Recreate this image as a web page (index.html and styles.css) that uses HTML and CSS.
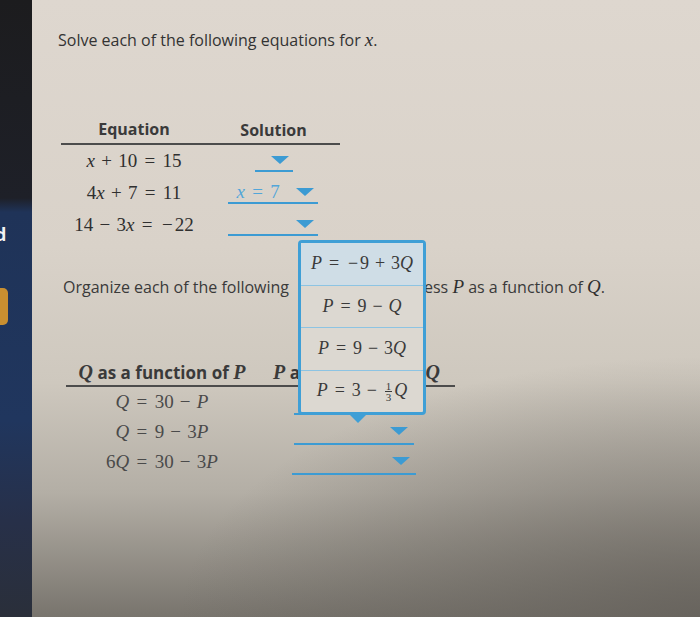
FILE: index.html
```html
<!DOCTYPE html>
<html>
<head>
<meta charset="utf-8">
<title>Equations</title>
<link rel="stylesheet" href="styles.css">
</head>
<body>
<div class="screen">
  <aside class="rail">
    <span class="rail-letter">d</span>
    <span class="rail-tab"></span>
  </aside>
  <main class="page">
    <p class="prompt">Solve each of the following equations for <span class="m"><i class="v">x</i></span>.</p>

    <div class="grid t1">
      <div class="hd">Equation</div>
      <div class="hd hd-sol">Solution</div>

      <div class="cell"><span class="m"><i class="v">x</i><span class="bin">+</span>10<span class="rel">=</span>15</span></div>
      <div class="cell"><span class="dd dd-s"><svg class="caret" viewBox="0 0 18 8"><path d="M0 0H18L9 8Z"/></svg></span></div>

      <div class="cell"><span class="m">4<i class="v">x</i><span class="bin">+</span>7<span class="rel">=</span>11</span></div>
      <div class="cell"><span class="dd dd-m"><span class="m val"><i class="v">x</i><span class="rel">=</span>7</span><svg class="caret" viewBox="0 0 18 8"><path d="M0 0H18L9 8Z"/></svg></span></div>

      <div class="cell"><span class="m">14<span class="bin">−</span>3<i class="v">x</i><span class="rel">=</span><span class="un">−</span>22</span></div>
      <div class="cell"><span class="dd dd-m"><svg class="caret" viewBox="0 0 18 8"><path d="M0 0H18L9 8Z"/></svg></span></div>
    </div>

    <p class="prompt prompt-2">Organize each of the following <span class="covered">equations to expr</span>ess <span class="m"><i class="v">P</i></span> as a function of <span class="m"><i class="v">Q</i></span>.</p>

    <div class="grid t2">
      <div class="hd"><span class="m"><i class="v">Q</i></span>&nbsp;as a function of&nbsp;<span class="m"><i class="v">P</i></span></div>
      <div class="hd"><span class="m"><i class="v">P</i></span>&nbsp;as a function of&nbsp;<span class="m"><i class="v">Q</i></span></div>

      <div class="cell"><span class="m lt"><i class="v">Q</i><span class="rel">=</span>30<span class="bin">−</span><i class="v">P</i></span></div>
      <div class="cell"><span class="dd dd-l"><svg class="caret" viewBox="0 0 18 8"><path d="M0 0H18L9 8Z"/></svg></span></div>

      <div class="cell"><span class="m lt"><i class="v">Q</i><span class="rel">=</span>9<span class="bin">−</span>3<i class="v">P</i></span></div>
      <div class="cell"><span class="dd dd-l"><svg class="caret" viewBox="0 0 18 8"><path d="M0 0H18L9 8Z"/></svg></span></div>

      <div class="cell"><span class="m lt">6<i class="v">Q</i><span class="rel">=</span>30<span class="bin">−</span>3<i class="v">P</i></span></div>
      <div class="cell"><span class="dd dd-l dd-last"><svg class="caret" viewBox="0 0 18 8"><path d="M0 0H18L9 8Z"/></svg></span></div>
    </div>

    <div class="menu">
      <div class="opt opt-on"><span class="m"><i class="v">P</i><span class="rel">=</span><span class="un">−</span>9<span class="bin">+</span>3<i class="v">Q</i></span></div>
      <div class="opt"><span class="m"><i class="v">P</i><span class="rel">=</span>9<span class="bin">−</span><i class="v">Q</i></span></div>
      <div class="opt"><span class="m"><i class="v">P</i><span class="rel">=</span>9<span class="bin">−</span>3<i class="v">Q</i></span></div>
      <div class="opt"><span class="m"><i class="v">P</i><span class="rel">=</span>3<span class="bin">−</span><span class="frac"><span class="num">1</span><span class="den">3</span></span><i class="v">Q</i></span></div>
    </div>
  </main>
</div>
</body>
</html>
```

FILE: styles.css
```css
* { box-sizing: border-box; margin: 0; padding: 0; }

html, body { width: 700px; height: 617px; overflow: hidden; }

body {
  font-family: "Open Sans", "DejaVu Sans", sans-serif;
  color: #363636;
  background: #d8d1c8;
}

.screen {
  display: flex;
  width: 700px;
  height: 617px;
  background:
    radial-gradient(ellipse 520px 260px at 100% 100%, rgba(100, 96, 90, 0.8) 0%, rgba(100, 96, 90, 0) 100%),
    linear-gradient(180deg, #ded7cf 0%, #d9d2c9 40%, #cec8be 62%, #b3aea5 80%, #78746d 100%);
}

/* left dark rail */
.rail {
  width: 32px;
  flex: none;
  display: flex;
  flex-direction: column;
  align-items: flex-start;
  padding-top: 224px;
  overflow: hidden;
  background: linear-gradient(180deg, #1c1c1e 0, #1e2028 198px, #1f3358 212px, #20365e 420px, #273049 520px, #2a2f3a 100%);
}

.rail-letter {
  color: #f2f2f2;
  font-weight: 700;
  font-size: 18px;
  line-height: 20px;
  margin-left: -5px;
}

.rail-tab {
  width: 8px;
  height: 37px;
  margin-top: 44px;
  background: #c98f30;
  border-radius: 0 5px 5px 0;
}

/* content */
.page {
  position: relative;
  flex: 1;
  padding-top: 29px;
}

.prompt {
  margin-left: 26px;
  font-size: 16px;
  line-height: 22px;
  color: #333;
}

.prompt-2 {
  margin: 35px 0 0 31px;
  color: #3a3a3a;
}

/* part of the sentence hidden under the open menu */
.covered {
  margin-left: 6px;
  letter-spacing: -0.4px;
}

/* math */
.m {
  font-family: "Liberation Serif", "DejaVu Serif", serif;
  font-size: 19px;
  color: #2f2f2f;
  white-space: nowrap;
}

.m .v { font-style: italic; }

.bin { display: inline-block; width: 1.222em; text-align: center; }
.rel { display: inline-block; width: 1.334em; text-align: center; }
.un  { display: inline-block; width: 0.778em; text-align: center; }

.m.lt { color: #4a4a4a; }

/* tables */
.grid { display: grid; }

.t1 {
  margin: 64px 0 0 29px;
  width: 279px;
  grid-template-columns: 146px 133px;
}

.t2 {
  margin: 62px 0 0 34px;
  width: 389px;
  grid-template-columns: 192px 197px;
}

.hd {
  height: 30px;
  display: flex;
  align-items: center;
  justify-content: center;
  font-weight: 700;
  font-size: 16px;
  color: #3a3a3a;
  border-bottom: 2px solid #4c4c4c;
  white-space: nowrap;
}

.hd-sol { padding-top: 2px; }

.t2 .hd { height: 27px; font-size: 17px; }
.t2 .hd .m { font-size: 20px; color: #3a3a3a; }

.cell {
  height: 32px;
  display: flex;
  align-items: center;
  justify-content: center;
}

.t2 .cell { height: 30px; }

/* dropdowns */
.dd {
  display: inline-flex;
  align-items: center;
  justify-content: flex-end;
  height: 22px;
  border-bottom: 2px solid #3c9bd3;
  padding-right: 4px;
}

.dd-s { width: 38px; }
.dd-m { width: 90px; margin-left: -2px; }
.dd-l { width: 120px; height: 26px; margin-left: -6px; padding-right: 6px; }
.dd-last { width: 124px; }

.dd .val {
  margin-right: auto;
  padding-left: 9px;
}
.dd .val.m { color: #52a6d9; }

.caret {
  width: 18px;
  height: 8px;
  fill: #3c9bd3;
  flex: none;
}

/* open dropdown menu (overlay) */
.menu {
  position: absolute;
  left: 266px;
  top: 240px;
  width: 128px;
  height: 175px;
  display: flex;
  flex-direction: column;
  border: 3px solid #3f9fd6;
  border-radius: 4px;
  background: #dcd8d1;
}

.menu::after {
  content: "";
  position: absolute;
  left: 49px;
  bottom: -11px;
  border-left: 8px solid transparent;
  border-right: 8px solid transparent;
  border-top: 8px solid #3f9fd6;
}

.opt {
  flex: 1;
  display: flex;
  align-items: center;
  justify-content: center;
  border-top: 1px solid #8dc4e3;
}

.opt:first-child { border-top: 0; }

.opt-on { background: #cfdde6; }

.opt .m { font-size: 18px; color: #3a3a3a; }

.frac {
  display: inline-flex;
  flex-direction: column;
  align-items: center;
  vertical-align: middle;
  font-size: 11px;
  line-height: 10px;
  margin: 0 2px;
}

.frac .num { border-bottom: 1px solid #3a3a3a; padding: 0 1px; }
```
